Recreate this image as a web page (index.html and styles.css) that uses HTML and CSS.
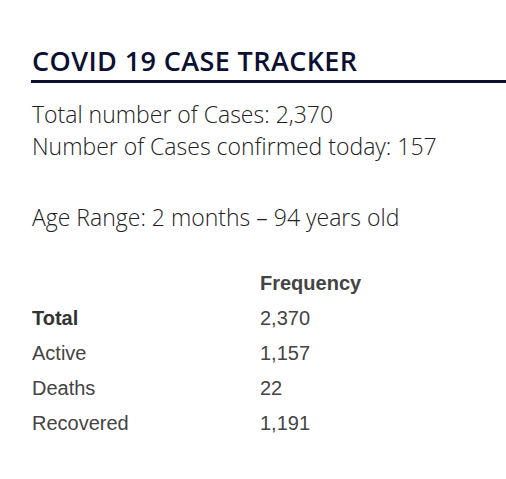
FILE: index.html
```html
<!DOCTYPE html>
<html lang="en">
<head>
    <meta charset="UTF-8" />
    <meta name="viewport" content="width=device-width, initial-scale=1.0" />
    <title>COVID 19 Case Tracker</title>
    <link rel="stylesheet" href="styles.css">
</head>
<body>
<div class="tracker">
    <h2 class="tracker-title">COVID 19 CASE TRACKER</h2>

    <div class="summary">
        <p>Total number of Cases: 2,370<br>Number of Cases confirmed today: 157</p>
        <p>Age Range: 2 months &ndash; 94 years old</p>
    </div>

    <table class="cases">
        <thead>
            <tr>
                <th></th>
                <th>Frequency</th>
            </tr>
        </thead>
        <tbody>
            <tr>
                <td><strong>Total</strong></td>
                <td>2,370</td>
            </tr>
            <tr>
                <td>Active</td>
                <td>1,157</td>
            </tr>
            <tr>
                <td>Deaths</td>
                <td>22</td>
            </tr>
            <tr>
                <td>Recovered</td>
                <td>1,191</td>
            </tr>
        </tbody>
    </table>
</div>
</body>
</html>
```

FILE: styles.css
```css
html, body {
    margin: 0;
    padding: 0;
    background: white;
}

.tracker {
    padding: 46px 0 0 31px;
}

.tracker-title {
    font-family: "Open Sans", sans-serif;
    font-weight: 600;
    font-size: 27px;
    letter-spacing: 0.4px;
    line-height: 30px;
    color: #0b1033;
    margin: 0;
    padding: 0 0 4px 1px;
    border-bottom: 3px solid #0b1033;
}

.summary {
    font-family: "Open Sans", sans-serif;
    font-weight: 300;
    font-size: 23px;
    line-height: 32px;
    color: #222;
    padding-left: 1px;
}

.summary p {
    margin: 15px 0 0;
}

.summary p + p {
    margin-top: 39px;
}

.cases {
    font-family: "Liberation Sans", Arial, sans-serif;
    font-size: 20px;
    color: #444;
    border-collapse: collapse;
    margin-top: 33px;
}

.cases th,
.cases td {
    text-align: left;
    padding: 0;
    height: 35px;
    vertical-align: middle;
}

.cases th {
    font-weight: bold;
}

.cases td:first-child,
.cases th:first-child {
    width: 228px;
    padding-left: 1px;
}

.cases strong {
    color: #333;
}
```
